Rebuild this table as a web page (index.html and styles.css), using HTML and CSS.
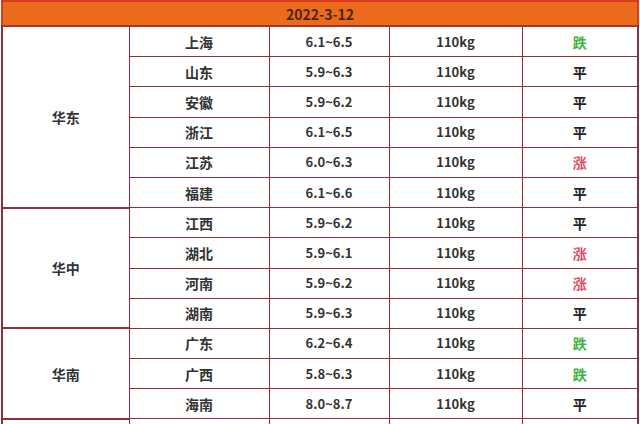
FILE: index.html
```html
<!DOCTYPE html>
<html lang="zh">
<head>
<meta charset="utf-8">
<link rel="stylesheet" href="styles.css">
</head>
<body>
<table class="price">
  <colgroup>
    <col class="c-region"><col class="c-prov"><col class="c-price"><col class="c-weight"><col class="c-trend">
  </colgroup>
  <thead>
    <tr class="head"><th colspan="5">2022-3-12</th></tr>
  </thead>
  <tbody>
    <tr><td class="region" rowspan="6">华东</td><td class="prov">上海</td><td>6.1~6.5</td><td>110kg</td><td class="down">跌</td></tr>
    <tr><td class="prov">山东</td><td>5.9~6.3</td><td>110kg</td><td class="flat">平</td></tr>
    <tr><td class="prov">安徽</td><td>5.9~6.2</td><td>110kg</td><td class="flat">平</td></tr>
    <tr><td class="prov">浙江</td><td>6.1~6.5</td><td>110kg</td><td class="flat">平</td></tr>
    <tr><td class="prov">江苏</td><td>6.0~6.3</td><td>110kg</td><td class="up">涨</td></tr>
    <tr><td class="prov">福建</td><td>6.1~6.6</td><td>110kg</td><td class="flat">平</td></tr>
    <tr><td class="region" rowspan="4">华中</td><td class="prov">江西</td><td>5.9~6.2</td><td>110kg</td><td class="flat">平</td></tr>
    <tr><td class="prov">湖北</td><td>5.9~6.1</td><td>110kg</td><td class="up">涨</td></tr>
    <tr><td class="prov">河南</td><td>5.9~6.2</td><td>110kg</td><td class="up">涨</td></tr>
    <tr><td class="prov">湖南</td><td>5.9~6.3</td><td>110kg</td><td class="flat">平</td></tr>
    <tr><td class="region" rowspan="3">华南</td><td class="prov">广东</td><td>6.2~6.4</td><td>110kg</td><td class="down">跌</td></tr>
    <tr><td class="prov">广西</td><td>5.8~6.3</td><td>110kg</td><td class="down">跌</td></tr>
    <tr><td class="prov">海南</td><td>8.0~8.7</td><td>110kg</td><td class="flat">平</td></tr>
    <tr class="tail"><td class="region"></td><td class="prov"></td><td></td><td></td><td></td></tr>
  </tbody>
</table>
</body>
</html>
```
FILE: styles.css
```css
html, body {
  margin: 0;
  padding: 0;
  background: #ffffff;
}
body {
  padding: 0 0 0 1px;
  font-family: "Noto Sans CJK SC", "Noto Sans", sans-serif;
  color: #333333;
}
.price {
  border-collapse: collapse;
  table-layout: fixed;
  width: 636px;
  font-weight: bold;
  font-size: 13px;
}
.c-region { width: 127px; }
.c-prov { width: 140px; }
.c-price { width: 120px; }
.c-weight { width: 133px; }
.c-trend { width: 116px; }
.head th {
  height: 23px;
  padding: 0;
  background: #ec6a1c;
  border: 2px solid #d83a1e;
  border-bottom: 2px solid #a8352c;
  color: #4a2510;
  font-size: 14px;
  text-align: center;
  line-height: 20px;
}
.price td {
  height: 29.2px;
  padding: 0;
  text-align: center;
  border: 1px solid #8e2f3a;
  line-height: 20px;
}
.price td.prov + td {
  border-left-color: #a09a9c;
}
.price td.region {
  border-left: 2px solid #8e2f3a;
  border-bottom: 2px solid #8e2f3a;
  font-size: 14px;
}
.price td:last-child {
  border-right: 2px solid #7c3450;
}
.price td.prov {
  font-size: 14px;
}
.price td.down { color: #3fb43c; font-size: 14px; }
.price td.up { color: #df4a60; font-size: 14px; }
.price td.flat { color: #222222; font-size: 14px; }
```
